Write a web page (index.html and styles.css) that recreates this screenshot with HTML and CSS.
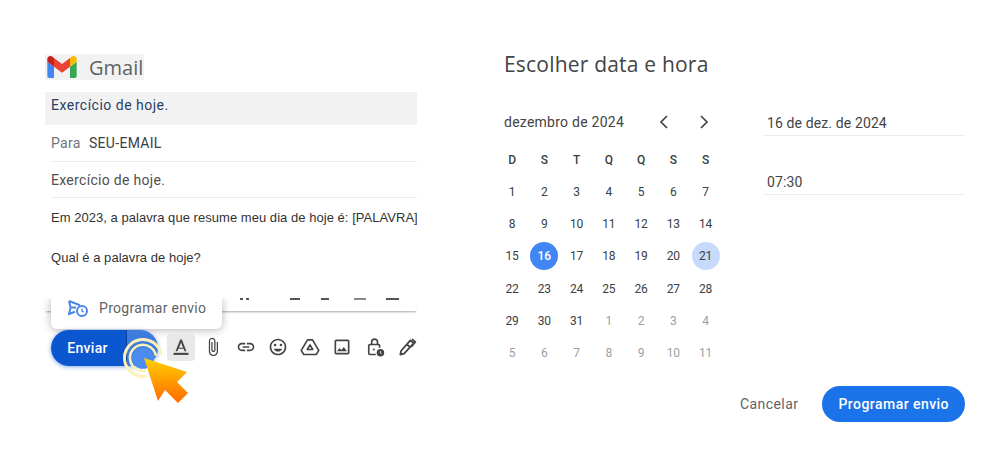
FILE: index.html

```html
<!DOCTYPE html>
<html lang="pt-BR">
<head>
  <meta charset="UTF-8">
  <title>Programar envio</title>
  <link rel="stylesheet" href="styles.css">
</head>
<body>
  <div class="page">

    <!-- Gmail compose -->
    <section class="compose">
      <div class="brand">
        <svg class="brand-logo" viewBox="52 42 88 66">
          <path fill="#4285f4" d="M58 108h14V74L52 59v43c0 3.32 2.69 6 6 6"/>
          <path fill="#34a853" d="M120 108h14c3.32 0 6-2.69 6-6V59l-20 15"/>
          <path fill="#fbbc04" d="M120 48v26l20-15v-8c0-7.42-8.47-11.65-14.4-7.2"/>
          <path fill="#ea4335" d="M72 74V48l24 18 24-18v26L96 92"/>
          <path fill="#c5221f" d="M52 51v8l20 15V48l-5.6-4.2c-5.94-4.45-14.4-.22-14.4 7.2"/>
        </svg>
        <span class="brand-name">Gmail</span>
      </div>

      <div class="subject-bar">Exercício de hoje.</div>
      <div class="field-row field-to"><span class="field-label">Para</span><span>SEU-EMAIL</span></div>
      <div class="field-row field-subject">Exercício de hoje.</div>

      <div class="message">
        <p class="message-line">Em 2023, a palavra que resume meu dia de hoje é: [PALAVRA]</p>
        <p class="message-line">Qual é a palavra de hoje?</p>
      </div>

      <div class="format-strip">
        <i class="mark mark-dot"></i><i class="mark mark-dot"></i>
        <i class="mark mark-a"></i><i class="mark mark-b"></i><i class="mark mark-c"></i><i class="mark mark-d"></i>
      </div>

      <div class="schedule-menu">
        <svg class="schedule-icon" viewBox="0 0 20 17" fill="none" stroke="#4a86e8" stroke-width="2">
          <path d="M1 1l11 4.2M1 1l1.6 6.5L1 14l6-2.2M2.600 7.500H8"/>
          <circle cx="14" cy="11" r="5"/>
          <path d="M14 8.500V11l1.800 1.200" stroke-width="1.400"/>
        </svg>
        <span>Programar envio</span>
      </div>

      <div class="compose-actions">
        <div class="send-btn">
          <span class="send-main">Enviar</span>
          <span class="send-more"></span>
        </div>
        <div class="tool tool-active">
          <svg viewBox="0 0 24 24"><path d="M9.600 13h4.800L12 6.500zM11 3h2l5.500 14h-2.200l-1.100-3H8.800l-1.100 3H5.500z" fill="#444"/><rect x="3" y="19" width="18" height="2.500" fill="#444"/></svg>
        </div>
        <div class="tool">
          <svg viewBox="0 0 24 24"><path fill="#444" d="M16.500 6v11.500c0 2.210-1.790 4-4 4s-4-1.790-4-4V5c0-1.380 1.120-2.500 2.500-2.500s2.500 1.120 2.500 2.500v10.500c0 .55-.45 1-1 1s-1-.45-1-1V6H10v9.500c0 1.380 1.120 2.500 2.500 2.500s2.500-1.120 2.500-2.500V5c0-2.210-1.790-4-4-4S7 2.790 7 5v12.500c0 3.040 2.460 5.500 5.500 5.500s5.500-2.460 5.500-5.500V6h-1.500z"/></svg>
        </div>
        <div class="tool">
          <svg viewBox="0 0 24 24"><path fill="#444" d="M3.900 12c0-1.710 1.390-3.100 3.100-3.100h4V7H7c-2.760 0-5 2.240-5 5s2.240 5 5 5h4v-1.900H7c-1.710 0-3.100-1.390-3.100-3.100zM8 13h8v-2H8v2zm9-6h-4v1.900h4c1.710 0 3.100 1.390 3.100 3.100s-1.390 3.100-3.100 3.100h-4V17h4c2.760 0 5-2.240 5-5s-2.240-5-5-5z"/></svg>
        </div>
        <div class="tool">
          <svg viewBox="0 0 24 24"><path fill="#444" d="M11.990 2C6.470 2 2 6.480 2 12s4.470 10 9.990 10C17.520 22 22 17.520 22 12S17.520 2 11.990 2zM12 20c-4.420 0-8-3.580-8-8s3.580-8 8-8 8 3.580 8 8-3.580 8-8 8z"/><circle cx="8.500" cy="9.500" r="1.500" fill="#444"/><circle cx="15.500" cy="9.500" r="1.500" fill="#444"/><path fill="#444" d="M12 17.500c2.330 0 4.310-1.460 5.110-3.500H6.890c.8 2.040 2.780 3.500 5.110 3.500z"/></svg>
        </div>
        <div class="tool">
          <svg viewBox="0 0 24 24" fill="none" stroke="#444" stroke-width="2" stroke-linejoin="round"><path d="M9 3.500h6L22.500 16l-3 5h-15l-3-5z"/><path d="M12 9.500l3.300 5.500H8.700z"/></svg>
        </div>
        <div class="tool">
          <svg viewBox="0 0 24 24"><path fill="#444" d="M19 5v14H5V5h14m0-2H5c-1.100 0-2 .9-2 2v14c0 1.100.9 2 2 2h14c1.100 0 2-.9 2-2V5c0-1.100-.9-2-2-2zm-4.860 8.860l-3 3.870L9 13.140 6 17h12l-3.860-5.140z"/></svg>
        </div>
        <div class="tool">
          <svg viewBox="0 0 24 24" fill="none" stroke="#444" stroke-width="2"><path d="M13 21H6a1.500 1.500 0 0 1-1.500-1.500v-9A1.500 1.500 0 0 1 6 9h10a1.500 1.500 0 0 1 1.500 1.500V13"/><path d="M8 9V6a3.500 3.500 0 0 1 7 0v3"/><circle cx="10.500" cy="15" r="1.200" fill="#444" stroke="none"/><circle cx="18.500" cy="19" r="4.500" fill="#444" stroke="none"/><path d="M18.500 17v2.200l1.300.8" stroke="#fff" stroke-width="1"/></svg>
        </div>
        <div class="tool">
          <svg viewBox="0 0 24 24" fill="none" stroke="#444" stroke-width="2.200" stroke-linejoin="round"><path d="M4 21l1-4.500L16 4l4 3.500L8.500 20z"/><path d="M12 9l4 3.500M18 2.500l4 3.500-5 6"/></svg>
        </div>

        <!-- click hint over the send button -->
        <svg class="click-hint" viewBox="0 0 72 72" fill="none">
          <defs>
            <linearGradient id="arrowFill" x1="0" y1="0" x2="0" y2="1">
              <stop offset="0" stop-color="#ffd000"/>
              <stop offset="1" stop-color="#ff6a00"/>
            </linearGradient>
          </defs>
          <path d="M41.200 19.800A18.500 18.500 0 1 0 26.200 41.200" stroke="#fdf0b8" stroke-width="3"/>
          <path d="M35.800 20.700A13 13 0 1 0 25.300 35.600" stroke="#fdf0b8" stroke-width="2.600"/>
          <circle cx="23" cy="23" r="10.800" fill="#4a8cf0"/>
          <path d="M24 23l43 14-10 10 11 11-10 10-13-13-7 11z" fill="url(#arrowFill)"/>
        </svg>
      </div>
    </section>

    <!-- date and time picker -->
    <section class="picker">
      <h2 class="picker-title">Escolher data e hora</h2>

      <div class="picker-body">
        <div class="calendar">
          <div class="month-row">
            <span class="month-name">dezembro de 2024</span>
            <svg class="chevron" viewBox="0 0 12 16" fill="none" stroke="#444" stroke-width="1.700"><path d="M9 2L3 8l6 6"/></svg>
            <svg class="chevron" viewBox="0 0 12 16" fill="none" stroke="#444" stroke-width="1.700"><path d="M3 2l6 6-6 6"/></svg>
          </div>
          <div class="days" id="days"></div>
        </div>

        <div class="when">
          <div class="when-field">16 de dez. de 2024</div>
          <div class="when-field">07:30</div>
        </div>
      </div>

      <div class="picker-actions">
        <span class="cancel">Cancelar</span>
        <span class="confirm">Programar envio</span>
      </div>
    </section>

  </div>

  <script>
    // Build the month grid
    const grid = document.getElementById("days");
    const add = (text, cls) => {
      const cell = document.createElement("span");
      cell.className = "day " + cls;
      cell.textContent = text;
      grid.appendChild(cell);
    };
    ["D", "S", "T", "Q", "Q", "S", "S"].forEach(d => add(d, "day-head"));
    for (let i = 1; i <= 31; i++) {
      add(i, i === 16 ? "day-picked" : i === 21 ? "day-today" : "");
    }
    for (let i = 1; i <= 11; i++) add(i, "day-out");
  </script>
</body>
</html>
```

FILE: styles.css

```css
* { box-sizing: border-box; }
body { margin: 0; background: #fff; color: #3c4043; font-family: Roboto, "Liberation Sans", sans-serif; }
.page { display: flex; width: 995px; height: 465px; overflow: hidden; padding: 54px 30px 0 45px; }

/* compose */
.compose { width: 372px; flex: none; margin-right: 79px; }
.brand { display: flex; align-items: center; width: 99px; height: 26px; padding-left: 2px; background: #f2f2f2; }
.brand-logo { width: 30px; height: 22px; flex: none; }
.brand-name { margin-left: 12px; font: 20px "Open Sans", Roboto, sans-serif; color: #5f6368; }

.subject-bar { height: 33px; margin-top: 12px; padding: 5px 6px 0; background: #f2f2f2; font-size: 14px; line-height: 16px; letter-spacing: .5px; color: #2b3f66; }
.field-row { margin-left: 6px; border-bottom: 1px solid #ebebeb; font-size: 14px; color: #3c4043; }
.field-to { display: flex; height: 37px; padding-top: 10px; letter-spacing: .3px; }
.field-label { width: 38px; color: #70757a; }
.field-subject { height: 36px; padding-top: 10px; letter-spacing: .3px; color: #505050; }

.message { height: 100px; padding: 12px 0 0 6px; overflow: hidden; }
.message-line { margin: 0 0 24px; font: 13px/16px "Liberation Sans", Arial, sans-serif; letter-spacing: .04px; white-space: nowrap; color: #333; }

.format-strip { position: relative; height: 13px; box-shadow: 0 2px 2px -1px rgba(0,0,0,.35); }
.mark { position: absolute; top: 0; height: 2px; background: #555; }
.mark-dot { width: 3px; left: 195px; }
.mark-dot + .mark-dot { left: 201px; }
.mark-a { left: 245px; width: 10px; }
.mark-b { left: 276px; width: 8px; }
.mark-c { left: 309px; width: 12px; background: #888; }
.mark-d { left: 341px; width: 13px; }

.schedule-menu { display: flex; align-items: center; gap: 11px; position: relative; width: 171px; height: 31px; margin: -13px 0 0 6px; padding: 0 0 11px 17px; background: #fff; border-radius: 0 0 6px 6px; box-shadow: 0 1px 8px rgba(0,0,0,.3); clip-path: inset(0 -12px -12px -12px); font-size: 14px; letter-spacing: .3px; color: #5f6368; }
.schedule-icon { width: 20px; height: 17px; flex: none; }

.compose-actions { display: flex; align-items: center; position: relative; margin-top: 1px; padding-left: 6px; }
.send-btn { display: flex; width: 107px; height: 36px; border-radius: 18px; overflow: hidden; box-shadow: 0 1px 4px rgba(11,87,208,.5); flex: none; margin-right: 9px; }
.send-main { display: flex; align-items: center; justify-content: center; width: 75px; padding-right: 2px; background: #0b57d0; color: #fff; font-size: 14px; font-weight: 500; letter-spacing: .3px; }
.send-more { flex: 1; background: #3d7cdc; border-left: 1px solid #0a4199; }
.tool { display: flex; align-items: center; justify-content: center; width: 28px; height: 28px; margin: -2px 4.300px 0 0; flex: none; border-radius: 4px; }
.tool svg { width: 20px; height: 20px; }
.tool-active { background: #e8e8e8; }
.click-hint { position: absolute; left: 75px; top: 5px; width: 72px; height: 72px; overflow: visible; }

/* picker */
.picker { width: 469px; flex: none; display: flex; flex-direction: column; }
.picker-title { margin: -2px 0 0 8px; font: 400 21px/24px "Open Sans", Roboto, sans-serif; color: #444; letter-spacing: .2px; }
.picker-body { display: flex; margin-top: 35px; }

.calendar { width: 225.750px; flex: none; }
.month-row { display: flex; align-items: center; height: 22px; padding-left: 8px; }
.month-name { width: 154px; flex: none; font-size: 14px; letter-spacing: .25px; color: #444; }
.chevron { width: 12px; height: 16px; margin-right: 28px; flex: none; }

.days { display: grid; grid-template-columns: repeat(7, 32.250px); grid-auto-rows: 32.250px; margin-top: 10.500px; }
.day { display: flex; align-items: center; justify-content: center; font-size: 12px; color: #3c4043; }
.day-head { font-weight: 500; color: #3c4043; }
.day-out { color: #9aa0a6; }
.day-picked, .day-today { width: 28px; height: 28px; margin: auto; border-radius: 50%; }
.day-picked { background: #4285f4; color: #fff; font-weight: 500; }
.day-today { background: #c6dafc; }

.when { width: 202px; margin: 1px 0 0 41.250px; }
.when-field { height: 24px; margin-bottom: 35px; padding: 3px 0 0 4px; border-bottom: 1px solid #ececec; font-size: 14px; letter-spacing: .12px; color: #444; }

.picker-actions { display: flex; align-items: center; justify-content: flex-end; gap: 24px; margin-top: 16.500px; }
.cancel { font-size: 14px; font-weight: 400; letter-spacing: .45px; color: #5f6368; }
.confirm { display: flex; align-items: center; height: 36px; padding: 0 16px; border-radius: 18px; background: #1a73e8; color: #fff; font-size: 14px; font-weight: 500; letter-spacing: .45px; }
```
